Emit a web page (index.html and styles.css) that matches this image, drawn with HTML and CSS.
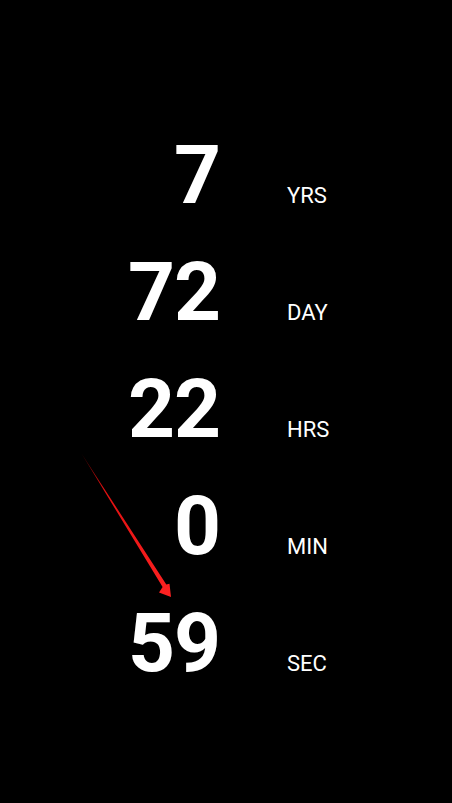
FILE: index.html
```html
<!DOCTYPE html>
<html>
<head>
<meta charset="utf-8">
<link rel="stylesheet" href="styles.css">
</head>
<body>
<div class="screen">
  <div class="countdown">
    <div class="row"><span class="num">7</span><span class="unit">YRS</span></div>
    <div class="row"><span class="num">72</span><span class="unit">DAY</span></div>
    <div class="row"><span class="num">22</span><span class="unit">HRS</span></div>
    <div class="row"><span class="num">0</span><span class="unit">MIN</span></div>
    <div class="row"><span class="num">59</span><span class="unit">SEC</span></div>
  </div>
  <svg class="arrow" width="452" height="803" viewBox="0 0 452 803">
    <defs>
      <linearGradient id="fade" x1="82" y1="454" x2="171" y2="597" gradientUnits="userSpaceOnUse">
        <stop offset="0" stop-color="#5a0000"/>
        <stop offset="0.25" stop-color="#e01010"/>
        <stop offset="1" stop-color="#ff2222"/>
      </linearGradient>
    </defs>
    <polygon points="81.5,453.5 166.3,584.6 169.5,583.8 171,597 159,592.5 162.6,587" fill="url(#fade)"/>
  </svg>
</div>
</body>
</html>
```
FILE: styles.css
```css
html, body {
  margin: 0;
  padding: 0;
  background: #000;
}
.screen {
  position: relative;
  width: 452px;
  height: 803px;
  background: #000;
  overflow: hidden;
}
.countdown {
  display: flex;
  flex-direction: column;
  padding-top: 117px;
}
.row {
  display: flex;
  align-items: baseline;
  height: 117px;
  line-height: 117px;
}
.num {
  width: 220px;
  text-align: right;
  font-family: Roboto, "Liberation Sans", sans-serif;
  font-weight: 700;
  font-size: 82px;
  letter-spacing: -1px;
  color: #fff;
}
.unit {
  margin-left: 67px;
  font-family: Roboto, "Liberation Sans", sans-serif;
  font-weight: 400;
  font-size: 22px;
  color: #fff;
}
.arrow {
  position: absolute;
  left: 0;
  top: 0;
}
```
